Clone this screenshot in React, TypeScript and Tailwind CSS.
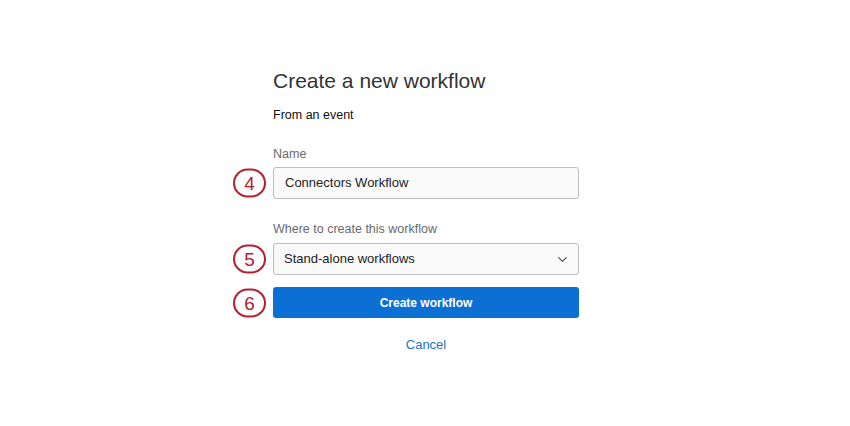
import { ChevronDown } from 'lucide-react';

function Marker({ n }: { n: number }) {
    return (
        <div className="absolute -left-[40px] top-1/2 -translate-y-1/2 w-[33px] h-[29px] rounded-full border-2 border-[#b3202e] flex items-center justify-center text-[#b3202e] text-[19px] leading-none">
            {n}
        </div>
    );
}

export default function App() {
    return (
        <div className="w-full h-[426px] bg-white flex justify-center pl-[2px]" style={{ fontFamily: '"Liberation Sans", Arial, sans-serif' }}>
            <div className="w-[306px] pt-[67px] flex flex-col">
                <h1 className="text-[21px] leading-[28px] text-[#333333]">Create a new workflow</h1>
                <p className="mt-[11px] text-[12.5px] leading-[18px] text-[#111111]">From an event</p>

                <label className="mt-[22px] text-[12.5px] leading-[16px] text-[#6a6a6a]">Name</label>
                <div className="relative mt-[5px]">
                    <Marker n={4} />
                    <div className="h-[32px] rounded-[3px] border border-[#bdbdbd] bg-[#fafafa] px-[11px] flex items-center text-[13px] text-[#222222]">
                        Connectors Workflow
                    </div>
                </div>

                <label className="mt-[22px] text-[12.5px] leading-[16px] text-[#6a6a6a]">Where to create this workflow</label>
                <div className="relative mt-[6px]">
                    <Marker n={5} />
                    <div className="h-[32px] rounded-[3px] border border-[#bdbdbd] bg-[#fafafa] pl-[10px] pr-[8px] flex items-center justify-between text-[13px] text-[#222222]">
                        <span>Stand-alone workflows</span>
                        <ChevronDown className="w-[15px] h-[15px] text-[#444444]" strokeWidth={1.75} />
                    </div>
                </div>

                <div className="relative mt-[12px]">
                    <Marker n={6} />
                    <button className="w-full h-[31px] rounded-[3px] bg-[#0c6fd3] text-white text-[12px] font-bold">
                        Create workflow
                    </button>
                </div>

                <button className="mt-[17px] self-center text-[13px] text-[#1b74cc]">Cancel</button>
            </div>
        </div>
    );
}
